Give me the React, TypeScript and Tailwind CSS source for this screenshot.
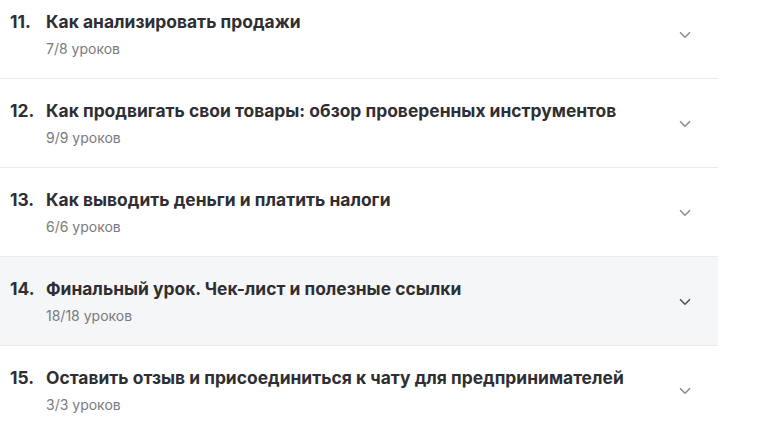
import { ChevronDown } from "lucide-react"

const lessons = [
    { n: 11, title: "Как анализировать продажи", sub: "7/8 уроков" },
    { n: 12, title: "Как продвигать свои товары: обзор проверенных инструментов", sub: "9/9 уроков" },
    { n: 13, title: "Как выводить деньги и платить налоги", sub: "6/6 уроков" },
    { n: 14, title: "Финальный урок. Чек-лист и полезные ссылки", sub: "18/18 уроков", active: true },
    { n: 15, title: "Оставить отзыв и присоединиться к чату для предпринимателей", sub: "3/3 уроков" },
]

const App = () => {
    return (
        <div className="w-[759px] h-[442px] overflow-hidden bg-white font-['Inter','Liberation_Sans',sans-serif]">
            <div className="w-[718px] -mt-[10px]">
                {lessons.map((l, i) => (
                    <div
                        key={l.n}
                        className={`flex items-center pl-[10px] pr-[24px] pt-[21px] pb-[19px] ${i < lessons.length - 1 ? "border-b border-[#e9eaec]" : ""} ${l.active ? "bg-[#f5f6f7]" : ""}`}
                    >
                        <div className="w-[36px] self-start text-[17.4px] leading-[22px] font-bold text-[#2e2e33]">
                            {l.n}.
                        </div>
                        <div className="flex-1 flex flex-col gap-[6px]">
                            <div className="text-[17.4px] leading-[22px] font-bold text-[#2e2e33] tracking-[0.02px]">
                                {l.title}
                            </div>
                            <div className="text-[14px] leading-[20px] text-[#7a7a80]">
                                {l.sub}
                            </div>
                        </div>
                        <ChevronDown
                            size={18}
                            strokeWidth={2.2}
                            className={l.active ? "text-[#55565c]" : "text-[#8d8f95]"}
                        />
                    </div>
                ))}
            </div>
        </div>
    )
}

export default App
